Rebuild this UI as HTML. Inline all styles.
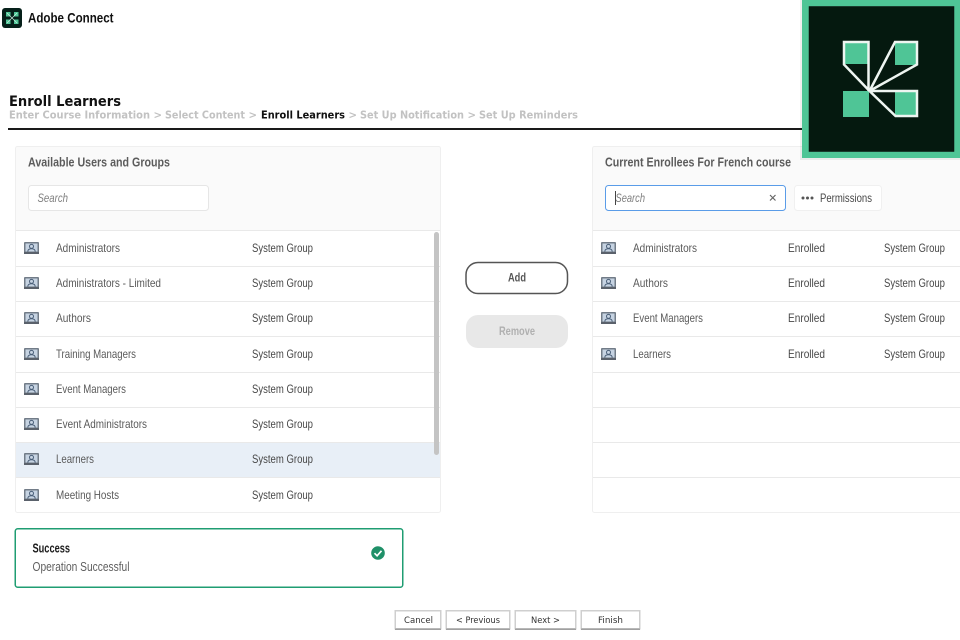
<!DOCTYPE html>
<html><head><meta charset="utf-8"><style>
html,body{margin:0;padding:0;background:#fff;width:960px;height:640px;overflow:hidden}
svg{display:block}
text{font-family:"Liberation Sans",sans-serif;font-size:12px;fill:#5a5a5a}
.s{fill:#484848}
.h{font-weight:bold;font-size:13px;fill:#5c5c5c}
.c{font-family:"DejaVu Sans",sans-serif;font-weight:bold;font-size:11px;fill:#c2c2c2}
.b{font-family:"DejaVu Sans",sans-serif;font-size:9px;fill:#333}
.l{stroke:#e9e9e9;stroke-width:1;fill:none}
</style></head><body>
<svg width="960" height="640" viewBox="0 0 960 640" xmlns="http://www.w3.org/2000/svg">
<defs>
<g id="u">
<rect x="0" y="0" width="15" height="12" rx="1" fill="#727c88"/>
<rect x="1.500" y="1.500" width="12" height="8" fill="#c6d3e2"/>
<rect x="0" y="10" width="15" height="2" fill="#5a616b"/>
<circle cx="7.500" cy="4.400" r="2" fill="none" stroke="#4a5f78" stroke-width="1"/>
<path d="M3.800 9.500c0-2.200 1.600-2.800 3.700-2.800s3.700.6 3.700 2.800" fill="none" stroke="#4a5f78" stroke-width="1"/>
</g>
</defs>

<!-- header -->
<rect x="2" y="8" width="20" height="20" rx="3" fill="#06201a"/>
<rect x="6" y="12" width="4.500" height="4.500" fill="#4fc596"/><rect x="14" y="12" width="4.500" height="4.500" fill="#4fc596"/>
<rect x="6" y="19.500" width="4.500" height="4.500" fill="#4fc596"/><rect x="14" y="19.500" width="4.500" height="4.500" fill="#4fc596"/>
<path d="M7 13l5 5 5-5M12 18l5 5M12 18l-5 5" stroke="#cfeee2" stroke-width=".7" fill="none"/>
<text x="28" y="22.500" textLength="85.500" lengthAdjust="spacingAndGlyphs" style="font-size:14px;font-weight:bold;fill:#111">Adobe Connect</text>

<text x="9" y="106" textLength="112" lengthAdjust="spacingAndGlyphs" style="font-family:'DejaVu Sans',sans-serif;font-size:14.500px;font-weight:bold;fill:#111">Enroll Learners</text>
<text class="c" x="9" y="118.500" textLength="141" lengthAdjust="spacingAndGlyphs">Enter Course Information</text>
<text class="c" x="153.500" y="118.500" textLength="8.500" lengthAdjust="spacingAndGlyphs">&gt;</text>
<text class="c" x="165" y="118.500" textLength="80" lengthAdjust="spacingAndGlyphs">Select Content</text>
<text class="c" x="248.500" y="118.500" textLength="8.500" lengthAdjust="spacingAndGlyphs">&gt;</text>
<text class="c" x="261" y="118.500" textLength="84" lengthAdjust="spacingAndGlyphs" style="fill:#111">Enroll Learners</text>
<text class="c" x="348.500" y="118.500" textLength="8.500" lengthAdjust="spacingAndGlyphs">&gt;</text>
<text class="c" x="360" y="118.500" textLength="104" lengthAdjust="spacingAndGlyphs">Set Up Notification</text>
<text class="c" x="467.500" y="118.500" textLength="8.500" lengthAdjust="spacingAndGlyphs">&gt;</text>
<text class="c" x="479" y="118.500" textLength="99" lengthAdjust="spacingAndGlyphs">Set Up Reminders</text>
<rect x="8" y="128" width="800" height="2" fill="#1a1a1a"/>

<!-- left panel -->
<rect x="15.500" y="146.500" width="425" height="84" fill="#fafafa"/>
<rect x="15.500" y="146.500" width="425" height="366" rx="2" fill="none" stroke="#efefef"/>
<text class="h" x="28" y="166.500" textLength="142" lengthAdjust="spacingAndGlyphs">Available Users and Groups</text>
<rect x="28.500" y="185.500" width="180" height="25" rx="3" fill="#fff" stroke="#e6e6e6"/>
<text x="37.500" y="202" textLength="30.500" lengthAdjust="spacingAndGlyphs" style="font-style:italic;fill:#808080">Search</text>
<rect x="16" y="442.500" width="424" height="35" fill="#e8eff7"/>
<path class="l" d="M16 230.500H440M16 266.500H440M16 301.500H440M16 336.500H440M16 372.500H440M16 407.500H440M16 442.500H440M16 477.500H440"/>
<rect x="434" y="232" width="5" height="223" rx="2.500" fill="#c4c4c4"/>

<use href="#u" x="24" y="242"/><use href="#u" x="24" y="277"/><use href="#u" x="24" y="312"/><use href="#u" x="24" y="348"/><use href="#u" x="24" y="383"/><use href="#u" x="24" y="418"/><use href="#u" x="24" y="453"/><use href="#u" x="24" y="489"/>

<text x="56" y="252" textLength="64" lengthAdjust="spacingAndGlyphs">Administrators</text>
<text x="56" y="287" textLength="105" lengthAdjust="spacingAndGlyphs">Administrators - Limited</text>
<text x="56" y="322" textLength="35" lengthAdjust="spacingAndGlyphs">Authors</text>
<text x="56" y="358" textLength="80" lengthAdjust="spacingAndGlyphs">Training Managers</text>
<text x="56" y="393" textLength="70" lengthAdjust="spacingAndGlyphs">Event Managers</text>
<text x="56" y="428" textLength="91" lengthAdjust="spacingAndGlyphs">Event Administrators</text>
<text x="56" y="463" textLength="38" lengthAdjust="spacingAndGlyphs">Learners</text>
<text x="56" y="499" textLength="63" lengthAdjust="spacingAndGlyphs">Meeting Hosts</text>

<text class="s" x="252" y="252" textLength="61" lengthAdjust="spacingAndGlyphs">System Group</text>
<text class="s" x="252" y="287" textLength="61" lengthAdjust="spacingAndGlyphs">System Group</text>
<text class="s" x="252" y="322" textLength="61" lengthAdjust="spacingAndGlyphs">System Group</text>
<text class="s" x="252" y="358" textLength="61" lengthAdjust="spacingAndGlyphs">System Group</text>
<text class="s" x="252" y="393" textLength="61" lengthAdjust="spacingAndGlyphs">System Group</text>
<text class="s" x="252" y="428" textLength="61" lengthAdjust="spacingAndGlyphs">System Group</text>
<text class="s" x="252" y="463" textLength="61" lengthAdjust="spacingAndGlyphs">System Group</text>
<text class="s" x="252" y="499" textLength="61" lengthAdjust="spacingAndGlyphs">System Group</text>

<!-- middle buttons -->
<rect x="466" y="262.500" width="101.500" height="31" rx="12" fill="#fff" stroke="#555" stroke-width="1.500"/>
<text x="508" y="281.500" textLength="18" lengthAdjust="spacingAndGlyphs" style="font-weight:bold;fill:#555">Add</text>
<rect x="466" y="315" width="102" height="33" rx="12" fill="#e8e8e8"/>
<text x="499" y="335" textLength="36" lengthAdjust="spacingAndGlyphs" style="font-weight:bold;fill:#b0b0b0">Remove</text>

<!-- right panel -->
<rect x="592.500" y="146.500" width="368" height="84" fill="#fafafa"/>
<rect x="592.500" y="146.500" width="380" height="366" rx="2" fill="none" stroke="#efefef"/>
<text class="h" x="605" y="166.500" textLength="186" lengthAdjust="spacingAndGlyphs">Current Enrollees For French course</text>
<rect x="605.500" y="185.500" width="180" height="25" rx="3" fill="#fff" stroke="#5a9ce8" stroke-width="1"/>
<rect x="615" y="191" width="1" height="14" fill="#444"/>
<text x="615.500" y="202" textLength="29.500" lengthAdjust="spacingAndGlyphs" style="font-style:italic;fill:#808080">Search</text>
<path d="M770 195l5.500 5.500m0-5.500l-5.500 5.500" stroke="#666" stroke-width="1.200" fill="none"/>
<rect x="794.500" y="185.500" width="87" height="25" rx="3" fill="#fff" stroke="#f0f0f0"/>
<circle cx="803" cy="198" r="1.500" fill="#555"/><circle cx="807.500" cy="198" r="1.500" fill="#555"/><circle cx="812" cy="198" r="1.500" fill="#555"/>
<text x="820" y="202" textLength="52" lengthAdjust="spacingAndGlyphs" class="s">Permissions</text>
<path class="l" d="M593 230.500H960M593 266.500H960M593 301.500H960M593 336.500H960M593 372.500H960M593 407.500H960M593 442.500H960M593 477.500H960"/>

<use href="#u" x="601" y="242"/><use href="#u" x="601" y="277"/><use href="#u" x="601" y="312"/><use href="#u" x="601" y="348"/>
<text x="633" y="252" textLength="64" lengthAdjust="spacingAndGlyphs">Administrators</text>
<text x="633" y="287" textLength="35" lengthAdjust="spacingAndGlyphs">Authors</text>
<text x="633" y="322" textLength="70" lengthAdjust="spacingAndGlyphs">Event Managers</text>
<text x="633" y="358" textLength="38" lengthAdjust="spacingAndGlyphs">Learners</text>
<text class="s" x="788" y="252" textLength="37" lengthAdjust="spacingAndGlyphs">Enrolled</text>
<text class="s" x="788" y="287" textLength="37" lengthAdjust="spacingAndGlyphs">Enrolled</text>
<text class="s" x="788" y="322" textLength="37" lengthAdjust="spacingAndGlyphs">Enrolled</text>
<text class="s" x="788" y="358" textLength="37" lengthAdjust="spacingAndGlyphs">Enrolled</text>
<text class="s" x="884" y="252" textLength="61" lengthAdjust="spacingAndGlyphs">System Group</text>
<text class="s" x="884" y="287" textLength="61" lengthAdjust="spacingAndGlyphs">System Group</text>
<text class="s" x="884" y="322" textLength="61" lengthAdjust="spacingAndGlyphs">System Group</text>
<text class="s" x="884" y="358" textLength="61" lengthAdjust="spacingAndGlyphs">System Group</text>

<!-- success toast -->
<rect x="15.250" y="528.750" width="387.500" height="58.500" rx="2.500" fill="#fff" stroke="#1f9d72" stroke-width="1.500"/>
<text x="32.500" y="552.500" textLength="37.500" lengthAdjust="spacingAndGlyphs" style="font-weight:bold;font-size:12.500px;fill:#1a1a1a">Success</text>
<text x="32.500" y="571" textLength="97" lengthAdjust="spacingAndGlyphs" style="font-size:12.500px;fill:#5f5f5f">Operation Successful</text>
<circle cx="378" cy="553" r="6.800" fill="#1f9068"/>
<path d="M374.500 553.200l2.600 2.600 4.400-5" stroke="#fff" stroke-width="1.700" fill="none"/>

<!-- bottom buttons -->
<g fill="#fff" stroke="#cfcfcf" stroke-width="1.500">
<rect x="395.250" y="610.750" width="45.500" height="18"/>
<rect x="446.250" y="610.750" width="63.500" height="18"/>
<rect x="515.250" y="610.750" width="60.500" height="18"/>
<rect x="581.250" y="610.750" width="58.500" height="18"/>
</g>
<path d="M395 629.250H441M446 629.250H510M515 629.250H576M581 629.250H640" stroke="#a0a0a0" stroke-width="1.500"/>
<text class="b" x="404" y="623" textLength="29" lengthAdjust="spacingAndGlyphs">Cancel</text>
<text class="b" x="456" y="623" textLength="44" lengthAdjust="spacingAndGlyphs">&lt; Previous</text>
<text class="b" x="531" y="623" textLength="29" lengthAdjust="spacingAndGlyphs">Next &gt;</text>
<text class="b" x="598" y="623" textLength="25" lengthAdjust="spacingAndGlyphs">Finish</text>

<!-- logo overlay -->
<rect x="800" y="0" width="160" height="160" fill="#000" opacity=".06"/>
<rect x="802" y="0" width="158" height="158" fill="#4fc596"/>
<rect x="809" y="6.500" width="145" height="145" fill="#05190f" stroke="#0a0a0a" stroke-width=".5"/>
<rect x="843" y="41" width="26" height="24" fill="#4fc596"/>
<rect x="895" y="41" width="23" height="24" fill="#4fc596"/>
<rect x="843" y="91" width="26" height="26" fill="#4fc596"/>
<rect x="895" y="91" width="23" height="26" fill="#4fc596"/>
<path d="M844 64H869V91Z" fill="#05190f"/>
<path d="M869 91H895V116Z" fill="#05190f"/>
<path d="M869.500 91L844 64.500V42H868.500V91" fill="none" stroke="#eef5f1" stroke-width="2.500"/>
<path d="M869.500 91L895 42H917V64.500L869.500 91" fill="none" stroke="#eef5f1" stroke-width="2.500"/>
<path d="M869.500 91H917V116H895.500L869.500 91" fill="none" stroke="#eef5f1" stroke-width="2.500"/>
</svg>
</body></html>
